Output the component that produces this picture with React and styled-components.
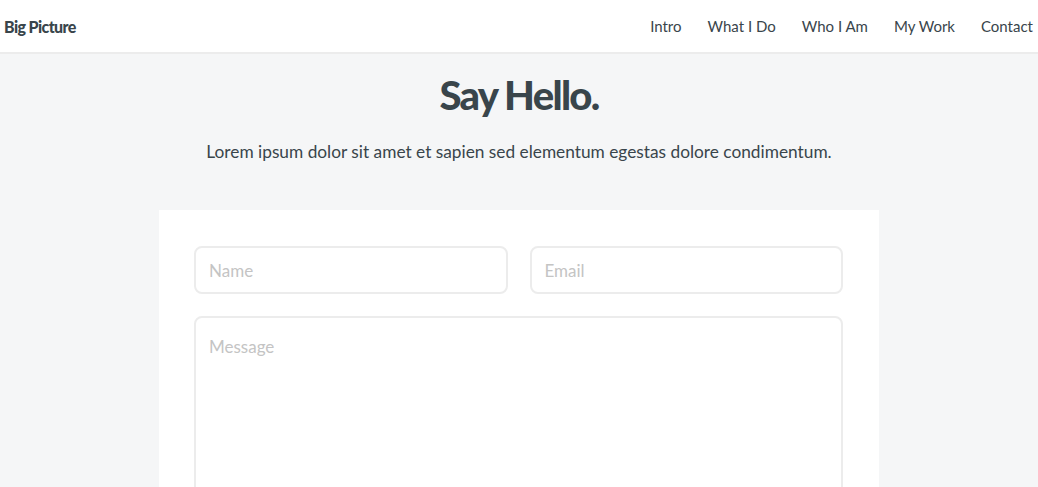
import styled, { createGlobalStyle } from 'styled-components'

const GlobalStyle = createGlobalStyle`
  html, body {
    margin: 0;
    padding: 0;
    background: #f5f6f7;
    font-family: "Source Sans Pro", Lato, "Open Sans", sans-serif;
    color: #39454b;
  }
  * { box-sizing: border-box; }
`

const navItems = ['Intro', 'What I Do', 'Who I Am', 'My Work', 'Contact']

const App = () => {
  return (
    <>
      <GlobalStyle />
      <Header>
        <Logo>Big Picture</Logo>
        <Nav>
          {navItems.map(item => (
            <NavLink key={item}>{item}</NavLink>
          ))}
        </Nav>
      </Header>
      <Main>
        <Title>Say Hello.</Title>
        <Lead>Lorem ipsum dolor sit amet et sapien sed elementum egestas dolore condimentum.</Lead>
        <Card>
          <Row>
            <Field type="text" placeholder="Name" />
            <Field type="email" placeholder="Email" />
          </Row>
          <Message placeholder="Message" />
        </Card>
      </Main>
    </>
  )
}

export default App

const Header = styled.header`
  height: 54px;
  background: #fff;
  border-bottom: 2px solid #ececec;
  display: flex;
  align-items: center;
  justify-content: space-between;
  padding: 0 5px 0 4px;
`
const Logo = styled.div`
  font-weight: 900;
  font-size: 16px;
  letter-spacing: -0.6px;
  color: #39454b;
`
const Nav = styled.nav`
  display: flex;
  gap: 26px;
`
const NavLink = styled.a`
  font-size: 15px;
  font-weight: 400;
  color: #39454b;
  cursor: pointer;
`
const Main = styled.main`
  display: flex;
  flex-direction: column;
  align-items: center;
  padding-top: 16px;
`
const Title = styled.h1`
  margin: 0;
  font-size: 40px;
  font-weight: 900;
  letter-spacing: -1.7px;
  line-height: 50px;
`
const Lead = styled.p`
  margin: 20px 0 0;
  font-size: 17.3px;
  font-weight: 400;
  line-height: 24px;
`
const Card = styled.div`
  width: 720px;
  margin-top: 46px;
  background: #fff;
  padding: 36px 36px 40px 35px;
  display: flex;
  flex-direction: column;
  gap: 22px;
`
const Row = styled.div`
  display: flex;
  gap: 22px;
`
const inputBase = `
  border: 2px solid #ececec;
  border-radius: 8px;
  font-family: "Source Sans Pro", Lato, "Open Sans", sans-serif;
  font-size: 17px;
  color: #39454b;
  padding: 0 13px;
  outline: none;
  background: #fff;
  &::placeholder { color: #c4c4c4; }
`
const Field = styled.input`
  ${inputBase}
  flex: 1;
  height: 48px;
  min-width: 0;
`
const Message = styled.textarea`
  ${inputBase}
  height: 220px;
  padding-top: 18px;
  resize: none;
`
